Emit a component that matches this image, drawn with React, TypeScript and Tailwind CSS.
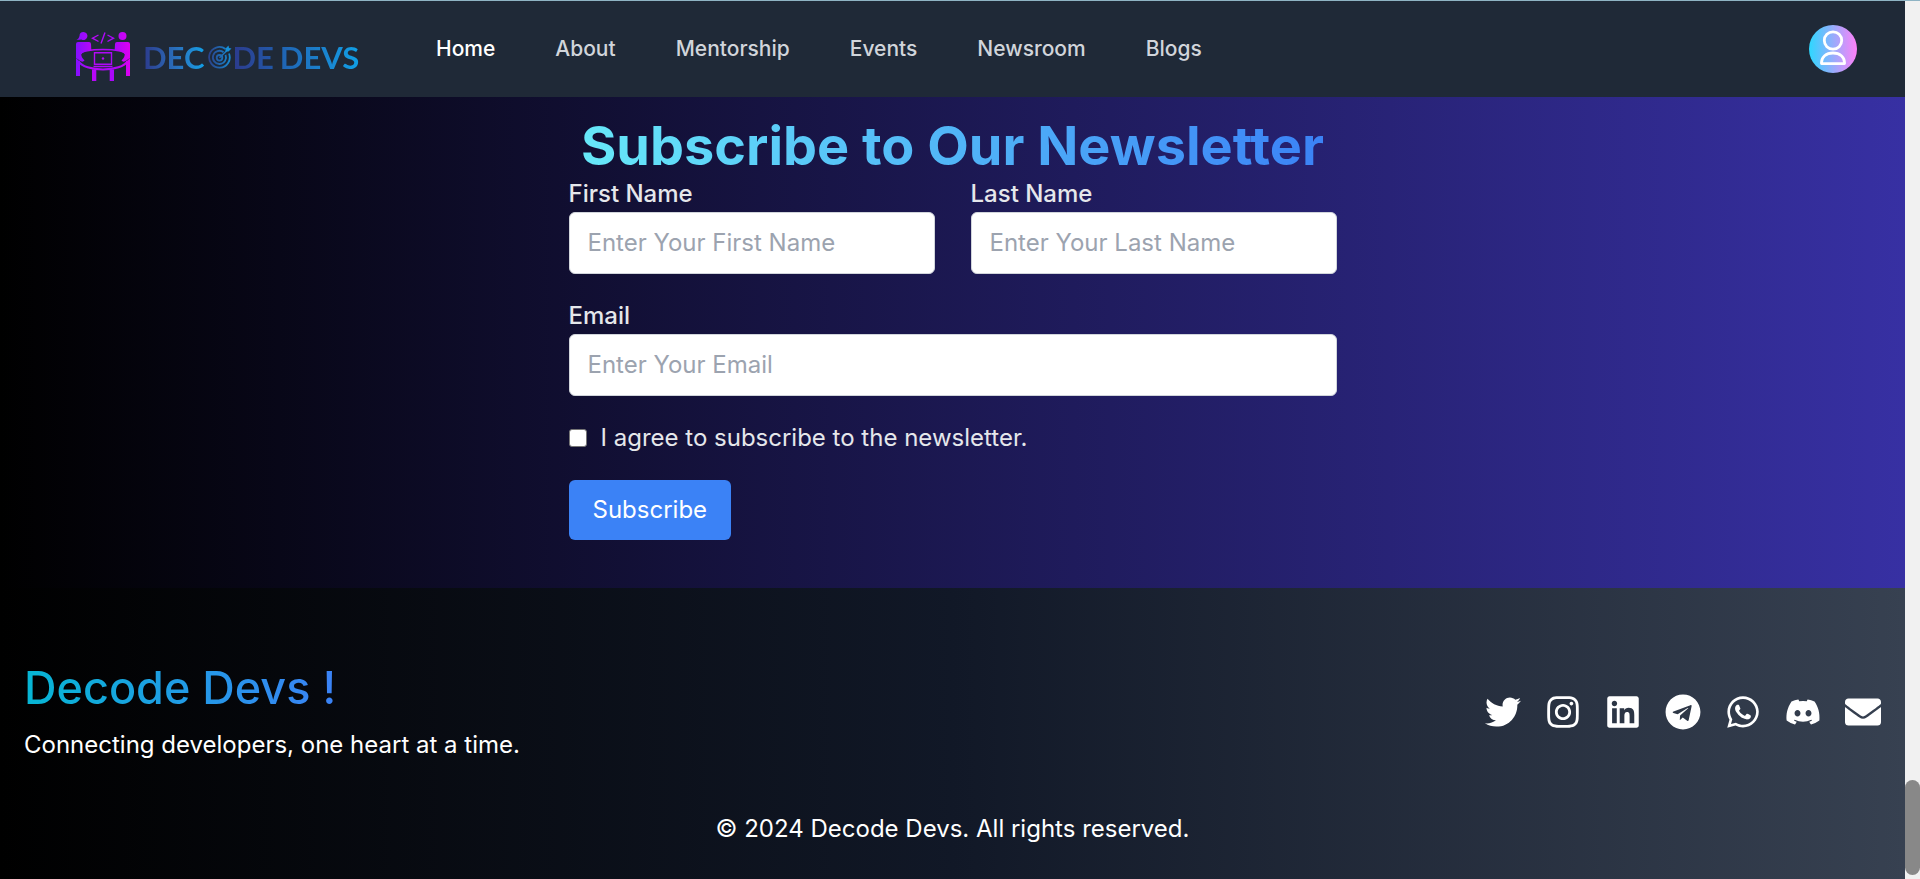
import React from "react";
import {
  FaTwitter,
  FaInstagram,
  FaLinkedin,
  FaTelegram,
  FaWhatsapp,
  FaDiscord,
  FaEnvelope,
} from "react-icons/fa";

const navLinks = ["Home", "About", "Mentorship", "Events", "Newsroom", "Blogs"];

const socials = [
  { label: "Twitter", Icon: FaTwitter },
  { label: "Instagram", Icon: FaInstagram },
  { label: "LinkedIn", Icon: FaLinkedin },
  { label: "Telegram", Icon: FaTelegram },
  { label: "WhatsApp", Icon: FaWhatsapp },
  { label: "Discord", Icon: FaDiscord },
  { label: "Email", Icon: FaEnvelope },
];

function LogoMark() {
  return (
    <svg width="56" height="52" viewBox="0 0 56 52" aria-hidden="true">
      <defs>
        <linearGradient id="mark" gradientUnits="userSpaceOnUse" x1="0" y1="0" x2="56" y2="0">
          <stop offset="0" stopColor="#8010ff" />
          <stop offset="0.3" stopColor="#b808f8" />
          <stop offset="0.7" stopColor="#a808fa" />
          <stop offset="1" stopColor="#e000f0" />
        </linearGradient>
      </defs>
      <g fill="url(#mark)">
        <path d="M8.500 1a4 4 0 1 1-2 7.500L1.500 9c1.500-.7 2.500-2 3-4a4 4 0 0 1 4-4z" />
        <circle cx="47.500" cy="5" r="4" />
        <path d="M1 13q0-2 2-2h11q2 0 2 2l.3 6q-8.500 1-10 4-.3 3 3.200 6.500-1.500 2-4 .5L1 27z" />
        <path d="M55 13q0-2-2-2H42q-2 0-2 2l-.3 6q8.500 1 10 4 .3 3-3.200 6.500 1.500 2 4 .5l4.500-3z" />
        <path d="M1 27l4 4v14H1zM55 27l-4 4v14h4zM17 38.500l4.300.5v11H17zM39 38.500l-4.300.5v11H39z" />
      </g>
      <g fill="none" stroke="url(#mark)" strokeWidth="1.400">
        <path d="M23.500 4 17.500 7.200l6 3.300M32.500 4l6 3.200-6 3.300M30 1.500l-4 11" />
        <path d="M6 23c0-2.500 9-4.500 22-4.500S50 20.500 50 23" />
        <path d="M3.500 30c3 5.500 13 8.500 24.500 8.500s21.500-3 24.500-8.500" strokeWidth="2" />
        <path d="M19.500 21.800h17v11.500h-17zM18.500 35.500h19" />
      </g>
      <circle cx="28" cy="27.500" r="1.200" fill="#b409f5" />
    </svg>
  );
}

function TargetMark() {
  return (
    <svg width="24" height="24" viewBox="0 0 24 24" fill="none" aria-hidden="true">
      <defs>
        <linearGradient id="target" gradientUnits="userSpaceOnUse" x1="0" y1="0" x2="24" y2="0">
          <stop offset="0" stopColor="#2b3f88" />
          <stop offset="1" stopColor="#1590d8" />
        </linearGradient>
      </defs>
      <g stroke="url(#target)">
        <path d="M17.500 4A10.300 10.300 0 1 0 21 8.500" strokeWidth="1.800" />
        <path d="M15.500 7.200a6.600 6.600 0 1 0 2 2.600" strokeWidth="1.800" />
        <circle cx="11.500" cy="12.800" r="2.800" strokeWidth="1.800" />
        <path d="M11.500 12.800 20 4.500" strokeWidth="1.600" />
      </g>
      <path d="M17.500 6.500V3.500L20.500.500l.5 2.500 2.500.5-3 3z" fill="#1590d8" />
    </svg>
  );
}

function Logo() {
  return (
    <a href="#" aria-label="Decode Devs" className="flex items-center gap-3">
      <LogoMark />
      <span className="flex items-center font-['Lato',sans-serif] text-[31px] leading-8 font-bold text-transparent">
        <span className="bg-gradient-to-r from-[#2b3a8c] to-[#0f9fe6] bg-clip-text">DEC</span>
        <span className="ml-1">
          <TargetMark />
        </span>
        <span className="bg-gradient-to-r from-[#2b3a8c] to-[#2158a8] bg-clip-text">DE</span>
        <span className="ml-1.5 bg-gradient-to-r from-[#1f62b2] to-[#0f9fe6] bg-clip-text">DEVS</span>
      </span>
    </a>
  );
}

function Header() {
  return (
    <header className="flex h-24 items-center bg-[#1f2937] pr-12 pl-[75px]">
      <div className="mt-4 w-[285px]">
        <Logo />
      </div>
      <nav className="ml-[76px] flex gap-[60px]">
        {navLinks.map((name, i) => (
          <a
            key={name}
            href="#"
            className={
              i === 0
                ? "text-[21px] leading-7 font-medium text-white"
                : "text-[21px] leading-7 font-medium text-[#d1d5db]"
            }
          >
            {name}
          </a>
        ))}
      </nav>
      <button
        type="button"
        aria-label="Profile"
        className="ml-auto size-12 rounded-full bg-[linear-gradient(to_right,#2dd8ff,#ff80f8)]"
      >
        <svg viewBox="0 0 48 48" className="size-12" fill="none" stroke="white" strokeWidth="2.800" strokeLinejoin="round">
          <circle cx="24" cy="15.500" r="8.700" />
          <path d="M12.500 38.600v-1C12.500 32 17 28 24 28s11.500 4 11.500 9.600v1z" />
        </svg>
      </button>
    </header>
  );
}

const inputClass =
  "w-full rounded-md border border-[#d1d5db] bg-white px-[18px] py-3 text-[24px] leading-9 text-gray-900 placeholder:text-[#9ca3af]";
const labelClass = "block text-[24px] leading-9 font-medium text-[#e5e7eb]";

function Newsletter() {
  return (
    <section className="bg-[linear-gradient(to_right,#000000,#3730a3)] pt-[19px] pb-12">
      <div className="mx-auto max-w-3xl">
        <h1 className="text-center text-[54px] leading-[60px] font-bold whitespace-nowrap">
          <span className="inline-block bg-[linear-gradient(to_right,#67e8f9,#3b82f6)] bg-clip-text text-transparent">
            Subscribe to Our Newsletter
          </span>
        </h1>
        <form className="flex flex-col gap-6">
          <div className="grid grid-cols-2 gap-9">
            <div>
              <label htmlFor="first" className={labelClass}>First Name</label>
              <input id="first" type="text" placeholder="Enter Your First Name" className={inputClass} />
            </div>
            <div>
              <label htmlFor="last" className={labelClass}>Last Name</label>
              <input id="last" type="text" placeholder="Enter Your Last Name" className={inputClass} />
            </div>
          </div>
          <div>
            <label htmlFor="email" className={labelClass}>Email</label>
            <input id="email" type="email" placeholder="Enter Your Email" className={inputClass} />
          </div>
          <div className="flex items-center gap-[14px]">
            <input
              id="agree"
              type="checkbox"
              className="size-[18px] appearance-none rounded-[3px] border border-[#767676] bg-white checked:bg-[#3b82f6]"
            />
            <label htmlFor="agree" className="text-[24px] leading-9 text-[#e5e7eb]">
              I agree to subscribe to the newsletter.
            </label>
          </div>
          <button
            type="submit"
            className="self-start rounded-md bg-[#3b82f6] px-6 py-3 text-[24px] leading-9 text-white"
          >
            Subscribe
          </button>
        </form>
      </div>
    </section>
  );
}

function Footer() {
  return (
    <footer className="bg-[linear-gradient(to_right,#000000,#111827,#374151)] px-6 pt-[73px] pb-8 text-white">
      <div className="flex items-center justify-between">
        <div>
          <h2 className="w-fit bg-[linear-gradient(to_right,#06b6d4,#3b82f6)] bg-clip-text text-[45px] leading-[54px] font-medium text-transparent">
            Decode Devs !
          </h2>
          <p className="mt-3 text-[24px] leading-9">Connecting developers, one heart at a time.</p>
        </div>
        <div className="flex gap-6">
          {socials.map(({ label, Icon }) => (
            <a key={label} href="#" aria-label={label}>
              <Icon className="size-9" />
            </a>
          ))}
        </div>
      </div>
      <p className="mt-12 text-center text-[24px] leading-9">© 2024 Decode Devs. All rights reserved.</p>
    </footer>
  );
}

export default function App() {
  return (
    <div className="border-t border-b border-t-[#8fb4c4] border-b-[#b9b4bd] font-['Inter',sans-serif]">
      <div className="flex">
        <div className="min-w-0 flex-1">
          <Header />
          <Newsletter />
          <Footer />
        </div>
        <div className="flex w-[15px] flex-col justify-end bg-[#f1f1f1] pb-1">
          <div className="h-[95px] rounded-full bg-[#888888]" />
        </div>
      </div>
    </div>
  );
}
